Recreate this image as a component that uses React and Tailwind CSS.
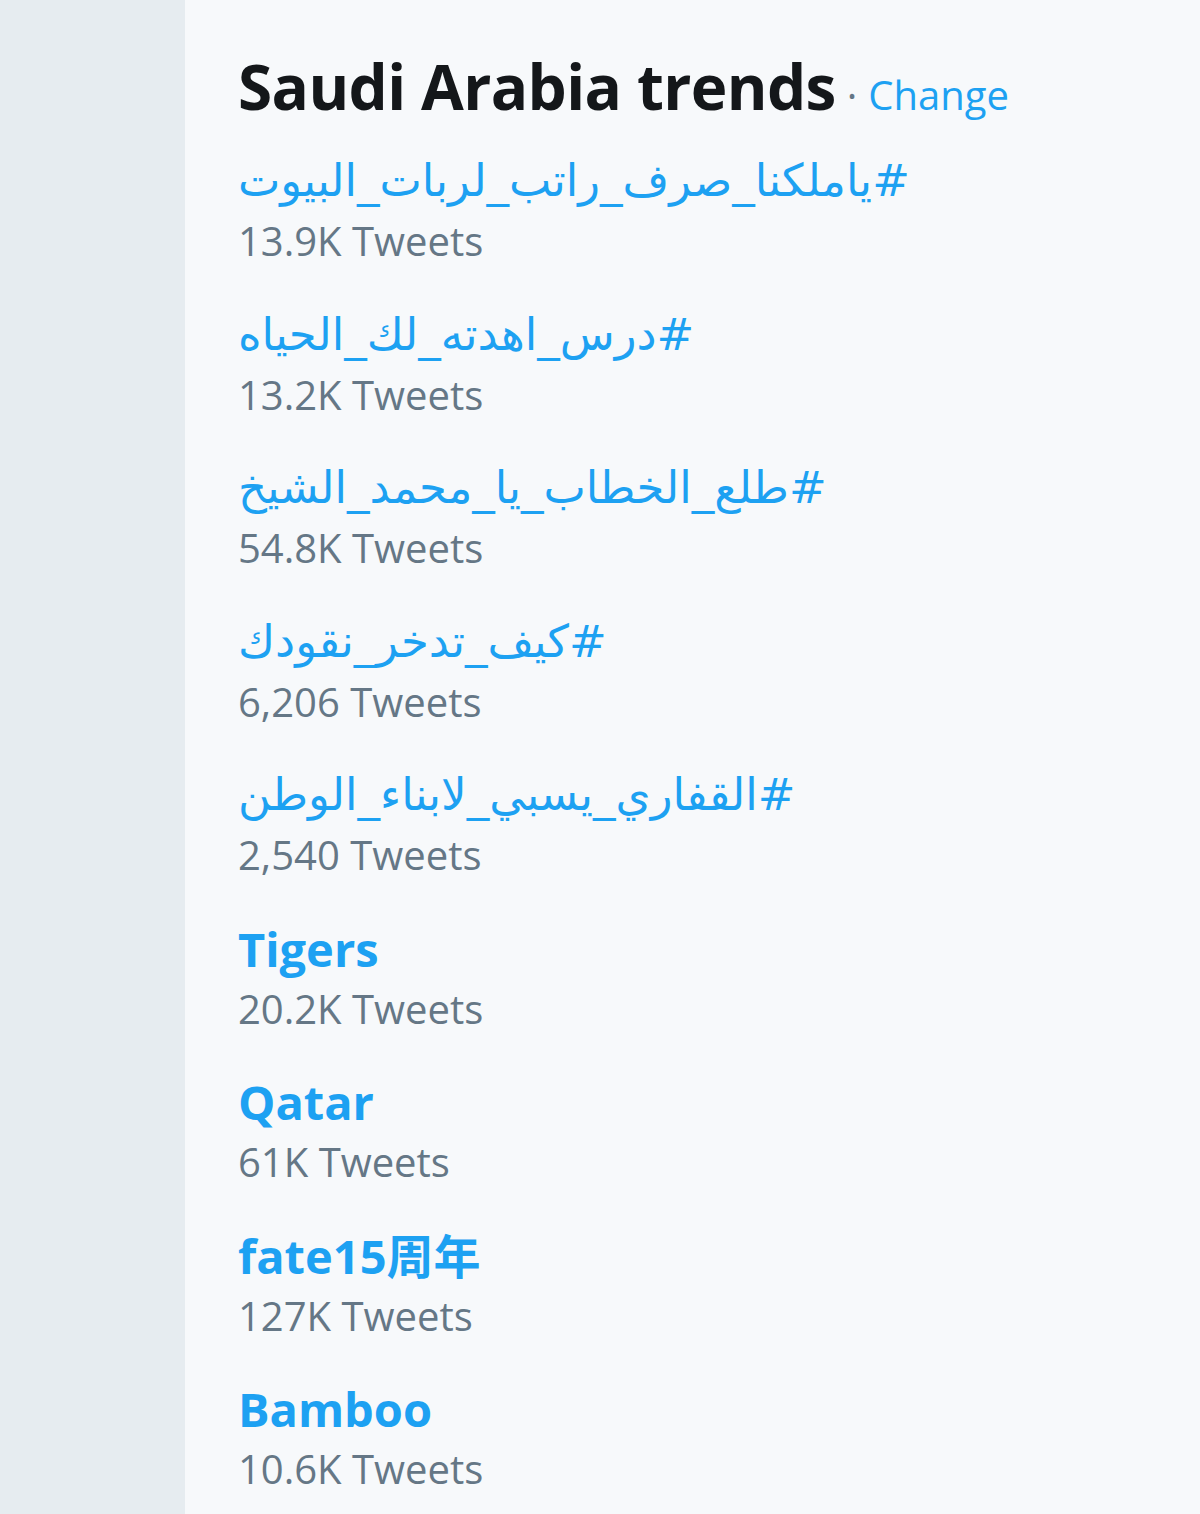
const trends = [
  { name: '#ياملكنا_صرف_راتب_لربات_البيوت', count: '13.9K Tweets', rtl: true },
  { name: '#درس_اهدته_لك_الحياه', count: '13.2K Tweets', rtl: true },
  { name: '#طلع_الخطاب_يا_محمد_الشيخ', count: '54.8K Tweets', rtl: true },
  { name: '#كيف_تدخر_نقودك', count: '6,206 Tweets', rtl: true },
  { name: '#القفاري_يسبي_لابناء_الوطن', count: '2,540 Tweets', rtl: true },
  { name: 'Tigers', count: '20.2K Tweets' },
  { name: 'Qatar', count: '61K Tweets' },
  { name: 'fate15周年', count: '127K Tweets' },
  { name: 'Bamboo', count: '10.6K Tweets' },
];

export default function App() {
  return (
    <div className="flex min-h-[1514px] w-[1200px] font-['Open_Sans','Noto_Sans_CJK_JP',sans-serif]">
      <div className="w-[185px] shrink-0 bg-[#e6ecf0]" />
      <div className="flex-1 bg-[#f7f9fb] pl-[53px] pt-[50px]">
        <div className="flex items-baseline leading-[72px]">
          <h3 className="text-[62px] font-bold text-[#14171a] tracking-[-0.6px]">Saudi Arabia trends</h3>
          <span className="mx-[11px] text-[40px] text-[#657786]">·</span>
          <a href="#" className="text-[40px] text-[#1da1f2]">Change</a>
        </div>

        <ul className="mt-[19px]">
          {trends.map((t) => (
            <li key={t.name} className="mb-[34.5px]">
              <div className="h-[62px] leading-[62px] whitespace-nowrap">
                {t.rtl ? (
                  <a href="#" dir="rtl" className="inline-block text-[45px] text-[#1da1f2] font-['DejaVu_Sans',sans-serif]">
                    {t.name}
                  </a>
                ) : (
                  <a href="#" className="text-[47px] font-bold text-[#1da1f2]">
                    {t.name}
                  </a>
                )}
              </div>
              <div className="h-[57px] leading-[57px] text-[40px] text-[#657786]">{t.count}</div>
            </li>
          ))}
        </ul>
      </div>
    </div>
  );
}
